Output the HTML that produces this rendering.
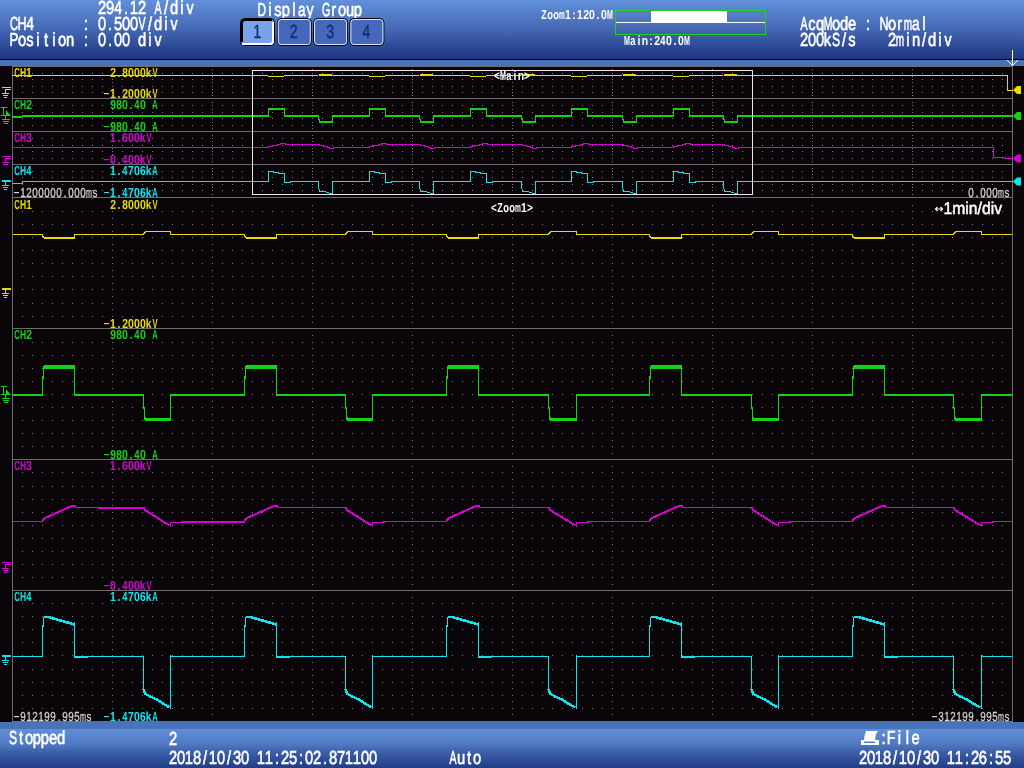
<!DOCTYPE html>
<html><head><meta charset="utf-8"><style>
html,body{margin:0;padding:0;width:1024px;height:768px;overflow:hidden;background:#0a0509;}
svg{position:absolute;left:0;top:0;display:block;will-change:transform;}
text{text-rendering:geometricPrecision;}
</style></head><body>
<svg width="1024" height="768" viewBox="0 0 1024 768">
<defs>
<linearGradient id="hg" x1="0" y1="0" x2="0" y2="1">
<stop offset="0" stop-color="#6290da"/>
<stop offset="0.5" stop-color="#4568b4"/>
<stop offset="0.8" stop-color="#2c4894"/>
<stop offset="1" stop-color="#203680"/>
</linearGradient>
<linearGradient id="fg" x1="0" y1="0" x2="0" y2="1">
<stop offset="0" stop-color="#6090d8"/>
<stop offset="0.4" stop-color="#5078c2"/>
<stop offset="0.6" stop-color="#3c5ea8"/>
<stop offset="1" stop-color="#223c86"/>
</linearGradient>
</defs>

<rect x="0" y="0" width="1024" height="59" fill="url(#hg)"/>
<rect x="0" y="59" width="1024" height="1" fill="#000000"/>
<rect x="0" y="60" width="1024" height="6" fill="#4a72b8"/>
<rect x="0" y="722" width="1024" height="7" fill="#4a72b8"/>
<rect x="0" y="729" width="1024" height="39" fill="url(#fg)"/>
<g shape-rendering="crispEdges">
<path d="M22 73.5H1003M22 79.5H1003M22 86.5H1003M22 92.5H1003M22 105.5H1003M22 112.5H1003M22 118.5H1003M22 125.5H1003M22 138.5H1003M22 145.5H1003M22 151.5H1003M22 158.5H1003M22 171.5H1003M22 177.5H1003M22 184.5H1003M22 190.5H1003M22 211.5H1003M22 224.5H1003M22 237.5H1003M22 250.5H1003M22 263.5H1003M22 276.5H1003M22 289.5H1003M22 303.5H1003M22 316.5H1003M22 342.5H1003M22 355.5H1003M22 368.5H1003M22 381.5H1003M22 394.5H1003M22 407.5H1003M22 420.5H1003M22 433.5H1003M22 446.5H1003M22 472.5H1003M22 486.5H1003M22 499.5H1003M22 512.5H1003M22 525.5H1003M22 538.5H1003M22 551.5H1003M22 564.5H1003M22 577.5H1003M22 603.5H1003M22 616.5H1003M22 629.5H1003M22 642.5H1003M22 655.5H1003M22 669.5H1003M22 682.5H1003M22 695.5H1003M22 708.5H1003" stroke="#7f7a80" stroke-width="1" stroke-dasharray="1 9" fill="none"/>
<path d="M112 69.5h1M112 73.5h1M112 76.5h1M112 79.5h1M112 82.5h1M112 86.5h1M112 89.5h1M112 92.5h1M112 95.5h1M112 102.5h1M112 105.5h1M112 109.5h1M112 112.5h1M112 115.5h1M112 118.5h1M112 122.5h1M112 125.5h1M112 128.5h1M112 135.5h1M112 138.5h1M112 141.5h1M112 145.5h1M112 148.5h1M112 151.5h1M112 154.5h1M112 158.5h1M112 161.5h1M112 168.5h1M112 171.5h1M112 174.5h1M112 177.5h1M112 181.5h1M112 184.5h1M112 187.5h1M112 190.5h1M112 194.5h1M112 205.5h1M112 211.5h1M112 218.5h1M112 224.5h1M112 231.5h1M112 237.5h1M112 244.5h1M112 250.5h1M112 257.5h1M112 263.5h1M112 270.5h1M112 276.5h1M112 283.5h1M112 289.5h1M112 296.5h1M112 303.5h1M112 309.5h1M112 316.5h1M112 322.5h1M112 335.5h1M112 342.5h1M112 348.5h1M112 355.5h1M112 361.5h1M112 368.5h1M112 374.5h1M112 381.5h1M112 388.5h1M112 394.5h1M112 401.5h1M112 407.5h1M112 414.5h1M112 420.5h1M112 427.5h1M112 433.5h1M112 440.5h1M112 446.5h1M112 453.5h1M112 466.5h1M112 472.5h1M112 479.5h1M112 486.5h1M112 492.5h1M112 499.5h1M112 505.5h1M112 512.5h1M112 518.5h1M112 525.5h1M112 531.5h1M112 538.5h1M112 544.5h1M112 551.5h1M112 557.5h1M112 564.5h1M112 570.5h1M112 577.5h1M112 584.5h1M112 597.5h1M112 603.5h1M112 610.5h1M112 616.5h1M112 623.5h1M112 629.5h1M112 636.5h1M112 642.5h1M112 649.5h1M112 655.5h1M112 662.5h1M112 669.5h1M112 675.5h1M112 682.5h1M112 688.5h1M112 695.5h1M112 701.5h1M112 708.5h1M112 714.5h1M212 69.5h1M212 73.5h1M212 76.5h1M212 79.5h1M212 82.5h1M212 86.5h1M212 89.5h1M212 92.5h1M212 95.5h1M212 102.5h1M212 105.5h1M212 109.5h1M212 112.5h1M212 115.5h1M212 118.5h1M212 122.5h1M212 125.5h1M212 128.5h1M212 135.5h1M212 138.5h1M212 141.5h1M212 145.5h1M212 148.5h1M212 151.5h1M212 154.5h1M212 158.5h1M212 161.5h1M212 168.5h1M212 171.5h1M212 174.5h1M212 177.5h1M212 181.5h1M212 184.5h1M212 187.5h1M212 190.5h1M212 194.5h1M212 205.5h1M212 211.5h1M212 218.5h1M212 224.5h1M212 231.5h1M212 237.5h1M212 244.5h1M212 250.5h1M212 257.5h1M212 263.5h1M212 270.5h1M212 276.5h1M212 283.5h1M212 289.5h1M212 296.5h1M212 303.5h1M212 309.5h1M212 316.5h1M212 322.5h1M212 335.5h1M212 342.5h1M212 348.5h1M212 355.5h1M212 361.5h1M212 368.5h1M212 374.5h1M212 381.5h1M212 388.5h1M212 394.5h1M212 401.5h1M212 407.5h1M212 414.5h1M212 420.5h1M212 427.5h1M212 433.5h1M212 440.5h1M212 446.5h1M212 453.5h1M212 466.5h1M212 472.5h1M212 479.5h1M212 486.5h1M212 492.5h1M212 499.5h1M212 505.5h1M212 512.5h1M212 518.5h1M212 525.5h1M212 531.5h1M212 538.5h1M212 544.5h1M212 551.5h1M212 557.5h1M212 564.5h1M212 570.5h1M212 577.5h1M212 584.5h1M212 597.5h1M212 603.5h1M212 610.5h1M212 616.5h1M212 623.5h1M212 629.5h1M212 636.5h1M212 642.5h1M212 649.5h1M212 655.5h1M212 662.5h1M212 669.5h1M212 675.5h1M212 682.5h1M212 688.5h1M212 695.5h1M212 701.5h1M212 708.5h1M212 714.5h1M312 69.5h1M312 73.5h1M312 76.5h1M312 79.5h1M312 82.5h1M312 86.5h1M312 89.5h1M312 92.5h1M312 95.5h1M312 102.5h1M312 105.5h1M312 109.5h1M312 112.5h1M312 115.5h1M312 118.5h1M312 122.5h1M312 125.5h1M312 128.5h1M312 135.5h1M312 138.5h1M312 141.5h1M312 145.5h1M312 148.5h1M312 151.5h1M312 154.5h1M312 158.5h1M312 161.5h1M312 168.5h1M312 171.5h1M312 174.5h1M312 177.5h1M312 181.5h1M312 184.5h1M312 187.5h1M312 190.5h1M312 194.5h1M312 205.5h1M312 211.5h1M312 218.5h1M312 224.5h1M312 231.5h1M312 237.5h1M312 244.5h1M312 250.5h1M312 257.5h1M312 263.5h1M312 270.5h1M312 276.5h1M312 283.5h1M312 289.5h1M312 296.5h1M312 303.5h1M312 309.5h1M312 316.5h1M312 322.5h1M312 335.5h1M312 342.5h1M312 348.5h1M312 355.5h1M312 361.5h1M312 368.5h1M312 374.5h1M312 381.5h1M312 388.5h1M312 394.5h1M312 401.5h1M312 407.5h1M312 414.5h1M312 420.5h1M312 427.5h1M312 433.5h1M312 440.5h1M312 446.5h1M312 453.5h1M312 466.5h1M312 472.5h1M312 479.5h1M312 486.5h1M312 492.5h1M312 499.5h1M312 505.5h1M312 512.5h1M312 518.5h1M312 525.5h1M312 531.5h1M312 538.5h1M312 544.5h1M312 551.5h1M312 557.5h1M312 564.5h1M312 570.5h1M312 577.5h1M312 584.5h1M312 597.5h1M312 603.5h1M312 610.5h1M312 616.5h1M312 623.5h1M312 629.5h1M312 636.5h1M312 642.5h1M312 649.5h1M312 655.5h1M312 662.5h1M312 669.5h1M312 675.5h1M312 682.5h1M312 688.5h1M312 695.5h1M312 701.5h1M312 708.5h1M312 714.5h1M412 69.5h1M412 73.5h1M412 76.5h1M412 79.5h1M412 82.5h1M412 86.5h1M412 89.5h1M412 92.5h1M412 95.5h1M412 102.5h1M412 105.5h1M412 109.5h1M412 112.5h1M412 115.5h1M412 118.5h1M412 122.5h1M412 125.5h1M412 128.5h1M412 135.5h1M412 138.5h1M412 141.5h1M412 145.5h1M412 148.5h1M412 151.5h1M412 154.5h1M412 158.5h1M412 161.5h1M412 168.5h1M412 171.5h1M412 174.5h1M412 177.5h1M412 181.5h1M412 184.5h1M412 187.5h1M412 190.5h1M412 194.5h1M412 205.5h1M412 211.5h1M412 218.5h1M412 224.5h1M412 231.5h1M412 237.5h1M412 244.5h1M412 250.5h1M412 257.5h1M412 263.5h1M412 270.5h1M412 276.5h1M412 283.5h1M412 289.5h1M412 296.5h1M412 303.5h1M412 309.5h1M412 316.5h1M412 322.5h1M412 335.5h1M412 342.5h1M412 348.5h1M412 355.5h1M412 361.5h1M412 368.5h1M412 374.5h1M412 381.5h1M412 388.5h1M412 394.5h1M412 401.5h1M412 407.5h1M412 414.5h1M412 420.5h1M412 427.5h1M412 433.5h1M412 440.5h1M412 446.5h1M412 453.5h1M412 466.5h1M412 472.5h1M412 479.5h1M412 486.5h1M412 492.5h1M412 499.5h1M412 505.5h1M412 512.5h1M412 518.5h1M412 525.5h1M412 531.5h1M412 538.5h1M412 544.5h1M412 551.5h1M412 557.5h1M412 564.5h1M412 570.5h1M412 577.5h1M412 584.5h1M412 597.5h1M412 603.5h1M412 610.5h1M412 616.5h1M412 623.5h1M412 629.5h1M412 636.5h1M412 642.5h1M412 649.5h1M412 655.5h1M412 662.5h1M412 669.5h1M412 675.5h1M412 682.5h1M412 688.5h1M412 695.5h1M412 701.5h1M412 708.5h1M412 714.5h1M512 69.5h1M512 73.5h1M512 76.5h1M512 79.5h1M512 82.5h1M512 86.5h1M512 89.5h1M512 92.5h1M512 95.5h1M512 102.5h1M512 105.5h1M512 109.5h1M512 112.5h1M512 115.5h1M512 118.5h1M512 122.5h1M512 125.5h1M512 128.5h1M512 135.5h1M512 138.5h1M512 141.5h1M512 145.5h1M512 148.5h1M512 151.5h1M512 154.5h1M512 158.5h1M512 161.5h1M512 168.5h1M512 171.5h1M512 174.5h1M512 177.5h1M512 181.5h1M512 184.5h1M512 187.5h1M512 190.5h1M512 194.5h1M512 205.5h1M512 211.5h1M512 218.5h1M512 224.5h1M512 231.5h1M512 237.5h1M512 244.5h1M512 250.5h1M512 257.5h1M512 263.5h1M512 270.5h1M512 276.5h1M512 283.5h1M512 289.5h1M512 296.5h1M512 303.5h1M512 309.5h1M512 316.5h1M512 322.5h1M512 335.5h1M512 342.5h1M512 348.5h1M512 355.5h1M512 361.5h1M512 368.5h1M512 374.5h1M512 381.5h1M512 388.5h1M512 394.5h1M512 401.5h1M512 407.5h1M512 414.5h1M512 420.5h1M512 427.5h1M512 433.5h1M512 440.5h1M512 446.5h1M512 453.5h1M512 466.5h1M512 472.5h1M512 479.5h1M512 486.5h1M512 492.5h1M512 499.5h1M512 505.5h1M512 512.5h1M512 518.5h1M512 525.5h1M512 531.5h1M512 538.5h1M512 544.5h1M512 551.5h1M512 557.5h1M512 564.5h1M512 570.5h1M512 577.5h1M512 584.5h1M512 597.5h1M512 603.5h1M512 610.5h1M512 616.5h1M512 623.5h1M512 629.5h1M512 636.5h1M512 642.5h1M512 649.5h1M512 655.5h1M512 662.5h1M512 669.5h1M512 675.5h1M512 682.5h1M512 688.5h1M512 695.5h1M512 701.5h1M512 708.5h1M512 714.5h1M612 69.5h1M612 73.5h1M612 76.5h1M612 79.5h1M612 82.5h1M612 86.5h1M612 89.5h1M612 92.5h1M612 95.5h1M612 102.5h1M612 105.5h1M612 109.5h1M612 112.5h1M612 115.5h1M612 118.5h1M612 122.5h1M612 125.5h1M612 128.5h1M612 135.5h1M612 138.5h1M612 141.5h1M612 145.5h1M612 148.5h1M612 151.5h1M612 154.5h1M612 158.5h1M612 161.5h1M612 168.5h1M612 171.5h1M612 174.5h1M612 177.5h1M612 181.5h1M612 184.5h1M612 187.5h1M612 190.5h1M612 194.5h1M612 205.5h1M612 211.5h1M612 218.5h1M612 224.5h1M612 231.5h1M612 237.5h1M612 244.5h1M612 250.5h1M612 257.5h1M612 263.5h1M612 270.5h1M612 276.5h1M612 283.5h1M612 289.5h1M612 296.5h1M612 303.5h1M612 309.5h1M612 316.5h1M612 322.5h1M612 335.5h1M612 342.5h1M612 348.5h1M612 355.5h1M612 361.5h1M612 368.5h1M612 374.5h1M612 381.5h1M612 388.5h1M612 394.5h1M612 401.5h1M612 407.5h1M612 414.5h1M612 420.5h1M612 427.5h1M612 433.5h1M612 440.5h1M612 446.5h1M612 453.5h1M612 466.5h1M612 472.5h1M612 479.5h1M612 486.5h1M612 492.5h1M612 499.5h1M612 505.5h1M612 512.5h1M612 518.5h1M612 525.5h1M612 531.5h1M612 538.5h1M612 544.5h1M612 551.5h1M612 557.5h1M612 564.5h1M612 570.5h1M612 577.5h1M612 584.5h1M612 597.5h1M612 603.5h1M612 610.5h1M612 616.5h1M612 623.5h1M612 629.5h1M612 636.5h1M612 642.5h1M612 649.5h1M612 655.5h1M612 662.5h1M612 669.5h1M612 675.5h1M612 682.5h1M612 688.5h1M612 695.5h1M612 701.5h1M612 708.5h1M612 714.5h1M712 69.5h1M712 73.5h1M712 76.5h1M712 79.5h1M712 82.5h1M712 86.5h1M712 89.5h1M712 92.5h1M712 95.5h1M712 102.5h1M712 105.5h1M712 109.5h1M712 112.5h1M712 115.5h1M712 118.5h1M712 122.5h1M712 125.5h1M712 128.5h1M712 135.5h1M712 138.5h1M712 141.5h1M712 145.5h1M712 148.5h1M712 151.5h1M712 154.5h1M712 158.5h1M712 161.5h1M712 168.5h1M712 171.5h1M712 174.5h1M712 177.5h1M712 181.5h1M712 184.5h1M712 187.5h1M712 190.5h1M712 194.5h1M712 205.5h1M712 211.5h1M712 218.5h1M712 224.5h1M712 231.5h1M712 237.5h1M712 244.5h1M712 250.5h1M712 257.5h1M712 263.5h1M712 270.5h1M712 276.5h1M712 283.5h1M712 289.5h1M712 296.5h1M712 303.5h1M712 309.5h1M712 316.5h1M712 322.5h1M712 335.5h1M712 342.5h1M712 348.5h1M712 355.5h1M712 361.5h1M712 368.5h1M712 374.5h1M712 381.5h1M712 388.5h1M712 394.5h1M712 401.5h1M712 407.5h1M712 414.5h1M712 420.5h1M712 427.5h1M712 433.5h1M712 440.5h1M712 446.5h1M712 453.5h1M712 466.5h1M712 472.5h1M712 479.5h1M712 486.5h1M712 492.5h1M712 499.5h1M712 505.5h1M712 512.5h1M712 518.5h1M712 525.5h1M712 531.5h1M712 538.5h1M712 544.5h1M712 551.5h1M712 557.5h1M712 564.5h1M712 570.5h1M712 577.5h1M712 584.5h1M712 597.5h1M712 603.5h1M712 610.5h1M712 616.5h1M712 623.5h1M712 629.5h1M712 636.5h1M712 642.5h1M712 649.5h1M712 655.5h1M712 662.5h1M712 669.5h1M712 675.5h1M712 682.5h1M712 688.5h1M712 695.5h1M712 701.5h1M712 708.5h1M712 714.5h1M812 69.5h1M812 73.5h1M812 76.5h1M812 79.5h1M812 82.5h1M812 86.5h1M812 89.5h1M812 92.5h1M812 95.5h1M812 102.5h1M812 105.5h1M812 109.5h1M812 112.5h1M812 115.5h1M812 118.5h1M812 122.5h1M812 125.5h1M812 128.5h1M812 135.5h1M812 138.5h1M812 141.5h1M812 145.5h1M812 148.5h1M812 151.5h1M812 154.5h1M812 158.5h1M812 161.5h1M812 168.5h1M812 171.5h1M812 174.5h1M812 177.5h1M812 181.5h1M812 184.5h1M812 187.5h1M812 190.5h1M812 194.5h1M812 205.5h1M812 211.5h1M812 218.5h1M812 224.5h1M812 231.5h1M812 237.5h1M812 244.5h1M812 250.5h1M812 257.5h1M812 263.5h1M812 270.5h1M812 276.5h1M812 283.5h1M812 289.5h1M812 296.5h1M812 303.5h1M812 309.5h1M812 316.5h1M812 322.5h1M812 335.5h1M812 342.5h1M812 348.5h1M812 355.5h1M812 361.5h1M812 368.5h1M812 374.5h1M812 381.5h1M812 388.5h1M812 394.5h1M812 401.5h1M812 407.5h1M812 414.5h1M812 420.5h1M812 427.5h1M812 433.5h1M812 440.5h1M812 446.5h1M812 453.5h1M812 466.5h1M812 472.5h1M812 479.5h1M812 486.5h1M812 492.5h1M812 499.5h1M812 505.5h1M812 512.5h1M812 518.5h1M812 525.5h1M812 531.5h1M812 538.5h1M812 544.5h1M812 551.5h1M812 557.5h1M812 564.5h1M812 570.5h1M812 577.5h1M812 584.5h1M812 597.5h1M812 603.5h1M812 610.5h1M812 616.5h1M812 623.5h1M812 629.5h1M812 636.5h1M812 642.5h1M812 649.5h1M812 655.5h1M812 662.5h1M812 669.5h1M812 675.5h1M812 682.5h1M812 688.5h1M812 695.5h1M812 701.5h1M812 708.5h1M812 714.5h1M912 69.5h1M912 73.5h1M912 76.5h1M912 79.5h1M912 82.5h1M912 86.5h1M912 89.5h1M912 92.5h1M912 95.5h1M912 102.5h1M912 105.5h1M912 109.5h1M912 112.5h1M912 115.5h1M912 118.5h1M912 122.5h1M912 125.5h1M912 128.5h1M912 135.5h1M912 138.5h1M912 141.5h1M912 145.5h1M912 148.5h1M912 151.5h1M912 154.5h1M912 158.5h1M912 161.5h1M912 168.5h1M912 171.5h1M912 174.5h1M912 177.5h1M912 181.5h1M912 184.5h1M912 187.5h1M912 190.5h1M912 194.5h1M912 205.5h1M912 211.5h1M912 218.5h1M912 224.5h1M912 231.5h1M912 237.5h1M912 244.5h1M912 250.5h1M912 257.5h1M912 263.5h1M912 270.5h1M912 276.5h1M912 283.5h1M912 289.5h1M912 296.5h1M912 303.5h1M912 309.5h1M912 316.5h1M912 322.5h1M912 335.5h1M912 342.5h1M912 348.5h1M912 355.5h1M912 361.5h1M912 368.5h1M912 374.5h1M912 381.5h1M912 388.5h1M912 394.5h1M912 401.5h1M912 407.5h1M912 414.5h1M912 420.5h1M912 427.5h1M912 433.5h1M912 440.5h1M912 446.5h1M912 453.5h1M912 466.5h1M912 472.5h1M912 479.5h1M912 486.5h1M912 492.5h1M912 499.5h1M912 505.5h1M912 512.5h1M912 518.5h1M912 525.5h1M912 531.5h1M912 538.5h1M912 544.5h1M912 551.5h1M912 557.5h1M912 564.5h1M912 570.5h1M912 577.5h1M912 584.5h1M912 597.5h1M912 603.5h1M912 610.5h1M912 616.5h1M912 623.5h1M912 629.5h1M912 636.5h1M912 642.5h1M912 649.5h1M912 655.5h1M912 662.5h1M912 669.5h1M912 675.5h1M912 682.5h1M912 688.5h1M912 695.5h1M912 701.5h1M912 708.5h1M912 714.5h1" stroke="#7f7a80" stroke-width="1" fill="none"/>
<rect x="12" y="66" width="1001" height="1" fill="#6e6a70"/>
<rect x="12" y="98" width="1001" height="1" fill="#6e6a70"/>
<rect x="12" y="131" width="1001" height="1" fill="#6e6a70"/>
<rect x="12" y="164" width="1001" height="1" fill="#6e6a70"/>
<rect x="12" y="197" width="1001" height="1" fill="#6e6a70"/>
<rect x="12" y="328" width="1001" height="1" fill="#6e6a70"/>
<rect x="12" y="459" width="1001" height="1" fill="#6e6a70"/>
<rect x="12" y="590" width="1001" height="1" fill="#6e6a70"/>
<rect x="12" y="721" width="1001" height="1" fill="#6e6a70"/>
<rect x="12" y="66" width="1" height="656" fill="#6e6a70"/>
<rect x="1012" y="66" width="1" height="656" fill="#6e6a70"/>
</g>
<g shape-rendering="crispEdges">
<rect x="13" y="234" width="30" height="1" fill="#e6dc00"/>
<rect x="42" y="234" width="1" height="3" fill="#e6dc00"/>
<rect x="43" y="236" width="1" height="2" fill="#e6dc00"/>
<rect x="44" y="237" width="31" height="2" fill="#e6dc00"/>
<rect x="74" y="234" width="1" height="4" fill="#e6dc00"/>
<rect x="75" y="234" width="69" height="1" fill="#e6dc00"/>
<rect x="143" y="233" width="1" height="2" fill="#e6dc00"/>
<rect x="144" y="232" width="1" height="2" fill="#e6dc00"/>
<rect x="145" y="231" width="1" height="2" fill="#e6dc00"/>
<rect x="145" y="231" width="26" height="1" fill="#e6dc00"/>
<rect x="170" y="231" width="1" height="4" fill="#e6dc00"/>
<rect x="171" y="234" width="74" height="1" fill="#e6dc00"/>
<rect x="244" y="234" width="1" height="3" fill="#e6dc00"/>
<rect x="245" y="236" width="1" height="2" fill="#e6dc00"/>
<rect x="246" y="237" width="31" height="2" fill="#e6dc00"/>
<rect x="276" y="234" width="1" height="4" fill="#e6dc00"/>
<rect x="277" y="234" width="69" height="1" fill="#e6dc00"/>
<rect x="345" y="233" width="1" height="2" fill="#e6dc00"/>
<rect x="346" y="232" width="1" height="2" fill="#e6dc00"/>
<rect x="347" y="231" width="1" height="2" fill="#e6dc00"/>
<rect x="347" y="231" width="26" height="1" fill="#e6dc00"/>
<rect x="372" y="231" width="1" height="4" fill="#e6dc00"/>
<rect x="373" y="234" width="74" height="1" fill="#e6dc00"/>
<rect x="446" y="234" width="1" height="3" fill="#e6dc00"/>
<rect x="447" y="236" width="1" height="2" fill="#e6dc00"/>
<rect x="448" y="237" width="31" height="2" fill="#e6dc00"/>
<rect x="478" y="234" width="1" height="4" fill="#e6dc00"/>
<rect x="479" y="234" width="70" height="1" fill="#e6dc00"/>
<rect x="548" y="233" width="1" height="2" fill="#e6dc00"/>
<rect x="549" y="232" width="1" height="2" fill="#e6dc00"/>
<rect x="550" y="231" width="1" height="2" fill="#e6dc00"/>
<rect x="550" y="231" width="27" height="1" fill="#e6dc00"/>
<rect x="576" y="231" width="1" height="4" fill="#e6dc00"/>
<rect x="577" y="234" width="73" height="1" fill="#e6dc00"/>
<rect x="649" y="234" width="1" height="3" fill="#e6dc00"/>
<rect x="650" y="236" width="1" height="2" fill="#e6dc00"/>
<rect x="651" y="237" width="31" height="2" fill="#e6dc00"/>
<rect x="681" y="234" width="1" height="4" fill="#e6dc00"/>
<rect x="682" y="234" width="70" height="1" fill="#e6dc00"/>
<rect x="751" y="233" width="1" height="2" fill="#e6dc00"/>
<rect x="752" y="232" width="1" height="2" fill="#e6dc00"/>
<rect x="753" y="231" width="1" height="2" fill="#e6dc00"/>
<rect x="753" y="231" width="26" height="1" fill="#e6dc00"/>
<rect x="778" y="231" width="1" height="4" fill="#e6dc00"/>
<rect x="779" y="234" width="74" height="1" fill="#e6dc00"/>
<rect x="852" y="234" width="1" height="3" fill="#e6dc00"/>
<rect x="853" y="236" width="1" height="2" fill="#e6dc00"/>
<rect x="854" y="237" width="31" height="2" fill="#e6dc00"/>
<rect x="884" y="234" width="1" height="4" fill="#e6dc00"/>
<rect x="885" y="234" width="69" height="1" fill="#e6dc00"/>
<rect x="953" y="233" width="1" height="2" fill="#e6dc00"/>
<rect x="954" y="232" width="1" height="2" fill="#e6dc00"/>
<rect x="955" y="231" width="1" height="2" fill="#e6dc00"/>
<rect x="955" y="231" width="27" height="1" fill="#e6dc00"/>
<rect x="981" y="231" width="1" height="4" fill="#e6dc00"/>
<rect x="982" y="234" width="30" height="1" fill="#e6dc00"/>
<rect x="13" y="394" width="30" height="2" fill="#14d214"/>
<rect x="42" y="376" width="1" height="20" fill="#14d214"/>
<rect x="43" y="366" width="1" height="13" fill="#14d214"/>
<rect x="44" y="365" width="31" height="4" fill="#14d214"/>
<rect x="74" y="365" width="1" height="31" fill="#14d214"/>
<rect x="75" y="394" width="69" height="2" fill="#14d214"/>
<rect x="143" y="394" width="1" height="15" fill="#14d214"/>
<rect x="144" y="407" width="1" height="13" fill="#14d214"/>
<rect x="145" y="417" width="1" height="4" fill="#14d214"/>
<rect x="146" y="418" width="25" height="3" fill="#14d214"/>
<rect x="170" y="394" width="1" height="27" fill="#14d214"/>
<rect x="171" y="394" width="74" height="2" fill="#14d214"/>
<rect x="244" y="376" width="1" height="20" fill="#14d214"/>
<rect x="245" y="366" width="1" height="13" fill="#14d214"/>
<rect x="246" y="365" width="31" height="4" fill="#14d214"/>
<rect x="276" y="365" width="1" height="31" fill="#14d214"/>
<rect x="277" y="394" width="69" height="2" fill="#14d214"/>
<rect x="345" y="394" width="1" height="15" fill="#14d214"/>
<rect x="346" y="407" width="1" height="13" fill="#14d214"/>
<rect x="347" y="417" width="1" height="4" fill="#14d214"/>
<rect x="348" y="418" width="25" height="3" fill="#14d214"/>
<rect x="372" y="394" width="1" height="27" fill="#14d214"/>
<rect x="373" y="394" width="74" height="2" fill="#14d214"/>
<rect x="446" y="376" width="1" height="20" fill="#14d214"/>
<rect x="447" y="366" width="1" height="13" fill="#14d214"/>
<rect x="448" y="365" width="31" height="4" fill="#14d214"/>
<rect x="478" y="365" width="1" height="31" fill="#14d214"/>
<rect x="479" y="394" width="70" height="2" fill="#14d214"/>
<rect x="548" y="394" width="1" height="15" fill="#14d214"/>
<rect x="549" y="407" width="1" height="13" fill="#14d214"/>
<rect x="550" y="417" width="1" height="4" fill="#14d214"/>
<rect x="551" y="418" width="26" height="3" fill="#14d214"/>
<rect x="576" y="394" width="1" height="27" fill="#14d214"/>
<rect x="577" y="394" width="73" height="2" fill="#14d214"/>
<rect x="649" y="376" width="1" height="20" fill="#14d214"/>
<rect x="650" y="366" width="1" height="13" fill="#14d214"/>
<rect x="651" y="365" width="31" height="4" fill="#14d214"/>
<rect x="681" y="365" width="1" height="31" fill="#14d214"/>
<rect x="682" y="394" width="70" height="2" fill="#14d214"/>
<rect x="751" y="394" width="1" height="15" fill="#14d214"/>
<rect x="752" y="407" width="1" height="13" fill="#14d214"/>
<rect x="753" y="417" width="1" height="4" fill="#14d214"/>
<rect x="754" y="418" width="25" height="3" fill="#14d214"/>
<rect x="778" y="394" width="1" height="27" fill="#14d214"/>
<rect x="779" y="394" width="74" height="2" fill="#14d214"/>
<rect x="852" y="376" width="1" height="20" fill="#14d214"/>
<rect x="853" y="366" width="1" height="13" fill="#14d214"/>
<rect x="854" y="365" width="31" height="4" fill="#14d214"/>
<rect x="884" y="365" width="1" height="31" fill="#14d214"/>
<rect x="885" y="394" width="69" height="2" fill="#14d214"/>
<rect x="953" y="394" width="1" height="15" fill="#14d214"/>
<rect x="954" y="407" width="1" height="13" fill="#14d214"/>
<rect x="955" y="417" width="1" height="4" fill="#14d214"/>
<rect x="956" y="418" width="26" height="3" fill="#14d214"/>
<rect x="981" y="394" width="1" height="27" fill="#14d214"/>
<rect x="982" y="394" width="30" height="2" fill="#14d214"/>
<rect x="13" y="521" width="30" height="1" fill="#d800d8"/>
<path d="M42.5,521.0 L43.5,519.0 L45.0,518.0 L73.0,505.5 L74.5,505.5 L75.0,507.0" stroke="#d800d8" stroke-width="2" fill="none" stroke-linejoin="round" stroke-linecap="butt" shape-rendering="crispEdges"/>
<rect x="75" y="507" width="69" height="1" fill="#d800d8"/>
<rect x="98" y="508" width="46" height="1" fill="#d800d8"/>
<path d="M143.5,507.5 L145.0,510.0 L169.5,525.5" stroke="#d800d8" stroke-width="2" fill="none" stroke-linejoin="round" stroke-linecap="butt" shape-rendering="crispEdges"/>
<rect x="170" y="522" width="1" height="5" fill="#d800d8"/>
<rect x="170" y="522" width="13" height="1" fill="#d800d8"/>
<rect x="181" y="521" width="64" height="2" fill="#d800d8"/>
<path d="M244.5,521.0 L245.5,519.0 L247.0,518.0 L275.0,505.5 L276.5,505.5 L277.0,507.0" stroke="#d800d8" stroke-width="2" fill="none" stroke-linejoin="round" stroke-linecap="butt" shape-rendering="crispEdges"/>
<rect x="277" y="507" width="69" height="1" fill="#d800d8"/>
<path d="M345.5,507.5 L347.0,510.0 L371.5,525.5" stroke="#d800d8" stroke-width="2" fill="none" stroke-linejoin="round" stroke-linecap="butt" shape-rendering="crispEdges"/>
<rect x="372" y="522" width="1" height="5" fill="#d800d8"/>
<rect x="372" y="522" width="13" height="1" fill="#d800d8"/>
<rect x="383" y="521" width="64" height="1" fill="#d800d8"/>
<path d="M446.5,521.0 L447.5,519.0 L449.0,518.0 L477.0,505.5 L478.5,505.5 L479.0,507.0" stroke="#d800d8" stroke-width="2" fill="none" stroke-linejoin="round" stroke-linecap="butt" shape-rendering="crispEdges"/>
<rect x="479" y="507" width="70" height="1" fill="#d800d8"/>
<path d="M548.5,507.5 L550.0,510.0 L575.5,525.5" stroke="#d800d8" stroke-width="2" fill="none" stroke-linejoin="round" stroke-linecap="butt" shape-rendering="crispEdges"/>
<rect x="576" y="522" width="1" height="5" fill="#d800d8"/>
<rect x="576" y="522" width="13" height="1" fill="#d800d8"/>
<rect x="587" y="521" width="63" height="1" fill="#d800d8"/>
<path d="M649.5,521.0 L650.5,519.0 L652.0,518.0 L680.0,505.5 L681.5,505.5 L682.0,507.0" stroke="#d800d8" stroke-width="2" fill="none" stroke-linejoin="round" stroke-linecap="butt" shape-rendering="crispEdges"/>
<rect x="682" y="507" width="70" height="1" fill="#d800d8"/>
<path d="M751.5,507.5 L753.0,510.0 L777.5,525.5" stroke="#d800d8" stroke-width="2" fill="none" stroke-linejoin="round" stroke-linecap="butt" shape-rendering="crispEdges"/>
<rect x="778" y="522" width="1" height="5" fill="#d800d8"/>
<rect x="778" y="522" width="13" height="1" fill="#d800d8"/>
<rect x="789" y="521" width="64" height="1" fill="#d800d8"/>
<path d="M852.5,521.0 L853.5,519.0 L855.0,518.0 L883.0,505.5 L884.5,505.5 L885.0,507.0" stroke="#d800d8" stroke-width="2" fill="none" stroke-linejoin="round" stroke-linecap="butt" shape-rendering="crispEdges"/>
<rect x="885" y="507" width="69" height="1" fill="#d800d8"/>
<path d="M953.5,507.5 L955.0,510.0 L980.5,525.5" stroke="#d800d8" stroke-width="2" fill="none" stroke-linejoin="round" stroke-linecap="butt" shape-rendering="crispEdges"/>
<rect x="981" y="522" width="1" height="5" fill="#d800d8"/>
<rect x="981" y="522" width="13" height="1" fill="#d800d8"/>
<rect x="992" y="521" width="20" height="1" fill="#d800d8"/>
<rect x="13" y="656" width="29" height="1" fill="#10e4ec"/>
<rect x="42" y="625" width="1" height="32" fill="#10e4ec"/>
<rect x="43" y="617" width="1" height="10" fill="#10e4ec"/>
<path d="M43.5,617.0 L48.5,617.0 L74.5,624.5" stroke="#10e4ec" stroke-width="2.6" fill="none" stroke-linejoin="round" stroke-linecap="butt" shape-rendering="crispEdges"/>
<rect x="74" y="622" width="1" height="36" fill="#10e4ec"/>
<rect x="74" y="656" width="14" height="2" fill="#10e4ec"/>
<rect x="88" y="656" width="55" height="1" fill="#10e4ec"/>
<rect x="143" y="656" width="1" height="35" fill="#10e4ec"/>
<path d="M143.5,689.0 L145.0,693.5 L150.0,696.5 L157.0,699.5 L163.0,703.5 L169.5,707.5" stroke="#10e4ec" stroke-width="2.4" fill="none" stroke-linejoin="round" stroke-linecap="butt" shape-rendering="crispEdges"/>
<rect x="170" y="655" width="1" height="54" fill="#10e4ec"/>
<rect x="170" y="656" width="74" height="1" fill="#10e4ec"/>
<rect x="244" y="625" width="1" height="32" fill="#10e4ec"/>
<rect x="245" y="617" width="1" height="10" fill="#10e4ec"/>
<path d="M245.5,617.0 L250.5,617.0 L276.5,624.5" stroke="#10e4ec" stroke-width="2.6" fill="none" stroke-linejoin="round" stroke-linecap="butt" shape-rendering="crispEdges"/>
<rect x="276" y="622" width="1" height="36" fill="#10e4ec"/>
<rect x="276" y="656" width="14" height="2" fill="#10e4ec"/>
<rect x="290" y="656" width="55" height="1" fill="#10e4ec"/>
<rect x="345" y="656" width="1" height="35" fill="#10e4ec"/>
<path d="M345.5,689.0 L347.0,693.5 L352.0,696.5 L359.0,699.5 L365.0,703.5 L371.5,707.5" stroke="#10e4ec" stroke-width="2.4" fill="none" stroke-linejoin="round" stroke-linecap="butt" shape-rendering="crispEdges"/>
<rect x="372" y="655" width="1" height="54" fill="#10e4ec"/>
<rect x="372" y="656" width="74" height="1" fill="#10e4ec"/>
<rect x="446" y="625" width="1" height="32" fill="#10e4ec"/>
<rect x="447" y="617" width="1" height="10" fill="#10e4ec"/>
<path d="M447.5,617.0 L452.5,617.0 L478.5,624.5" stroke="#10e4ec" stroke-width="2.6" fill="none" stroke-linejoin="round" stroke-linecap="butt" shape-rendering="crispEdges"/>
<rect x="478" y="622" width="1" height="36" fill="#10e4ec"/>
<rect x="478" y="656" width="14" height="2" fill="#10e4ec"/>
<rect x="492" y="656" width="56" height="1" fill="#10e4ec"/>
<rect x="548" y="656" width="1" height="35" fill="#10e4ec"/>
<path d="M548.5,689.0 L550.0,693.5 L555.0,696.5 L562.0,699.5 L568.0,703.5 L575.5,707.5" stroke="#10e4ec" stroke-width="2.4" fill="none" stroke-linejoin="round" stroke-linecap="butt" shape-rendering="crispEdges"/>
<rect x="576" y="655" width="1" height="54" fill="#10e4ec"/>
<rect x="576" y="656" width="73" height="1" fill="#10e4ec"/>
<rect x="649" y="625" width="1" height="32" fill="#10e4ec"/>
<rect x="650" y="617" width="1" height="10" fill="#10e4ec"/>
<path d="M650.5,617.0 L655.5,617.0 L681.5,624.5" stroke="#10e4ec" stroke-width="2.6" fill="none" stroke-linejoin="round" stroke-linecap="butt" shape-rendering="crispEdges"/>
<rect x="681" y="622" width="1" height="36" fill="#10e4ec"/>
<rect x="681" y="656" width="14" height="2" fill="#10e4ec"/>
<rect x="695" y="656" width="56" height="1" fill="#10e4ec"/>
<rect x="751" y="656" width="1" height="35" fill="#10e4ec"/>
<path d="M751.5,689.0 L753.0,693.5 L758.0,696.5 L765.0,699.5 L771.0,703.5 L777.5,707.5" stroke="#10e4ec" stroke-width="2.4" fill="none" stroke-linejoin="round" stroke-linecap="butt" shape-rendering="crispEdges"/>
<rect x="778" y="655" width="1" height="54" fill="#10e4ec"/>
<rect x="778" y="656" width="74" height="1" fill="#10e4ec"/>
<rect x="852" y="625" width="1" height="32" fill="#10e4ec"/>
<rect x="853" y="617" width="1" height="10" fill="#10e4ec"/>
<path d="M853.5,617.0 L858.5,617.0 L884.5,624.5" stroke="#10e4ec" stroke-width="2.6" fill="none" stroke-linejoin="round" stroke-linecap="butt" shape-rendering="crispEdges"/>
<rect x="884" y="622" width="1" height="36" fill="#10e4ec"/>
<rect x="884" y="656" width="14" height="2" fill="#10e4ec"/>
<rect x="898" y="656" width="55" height="1" fill="#10e4ec"/>
<rect x="953" y="656" width="1" height="35" fill="#10e4ec"/>
<path d="M953.5,689.0 L955.0,693.5 L960.0,696.5 L967.0,699.5 L973.0,703.5 L980.5,707.5" stroke="#10e4ec" stroke-width="2.4" fill="none" stroke-linejoin="round" stroke-linecap="butt" shape-rendering="crispEdges"/>
<rect x="981" y="655" width="1" height="54" fill="#10e4ec"/>
<rect x="981" y="656" width="31" height="1" fill="#10e4ec"/>
<rect x="12" y="75" width="256" height="1" fill="#e6dc00"/>
<rect x="268" y="76" width="16" height="1" fill="#e6dc00"/>
<rect x="284" y="75" width="34" height="1" fill="#e6dc00"/>
<rect x="319" y="74" width="13" height="2" fill="#e6dc00"/>
<rect x="332" y="75" width="37" height="1" fill="#e6dc00"/>
<rect x="369" y="76" width="16" height="1" fill="#e6dc00"/>
<rect x="385" y="75" width="34" height="1" fill="#e6dc00"/>
<rect x="420" y="74" width="13" height="2" fill="#e6dc00"/>
<rect x="433" y="75" width="37" height="1" fill="#e6dc00"/>
<rect x="470" y="76" width="16" height="1" fill="#e6dc00"/>
<rect x="486" y="75" width="35" height="1" fill="#e6dc00"/>
<rect x="522" y="74" width="13" height="2" fill="#e6dc00"/>
<rect x="535" y="75" width="36" height="1" fill="#e6dc00"/>
<rect x="571" y="76" width="16" height="1" fill="#e6dc00"/>
<rect x="587" y="75" width="35" height="1" fill="#e6dc00"/>
<rect x="623" y="74" width="13" height="2" fill="#e6dc00"/>
<rect x="636" y="75" width="37" height="1" fill="#e6dc00"/>
<rect x="673" y="76" width="16" height="1" fill="#e6dc00"/>
<rect x="689" y="75" width="34" height="1" fill="#e6dc00"/>
<rect x="724" y="74" width="13" height="2" fill="#e6dc00"/>
<rect x="737" y="75" width="271" height="1" fill="#e6dc00"/>
<rect x="1007" y="75" width="1" height="16" fill="#e6dc00"/>
<rect x="1007" y="90" width="6" height="1" fill="#e6dc00"/>
<rect x="12" y="116" width="10" height="2" fill="#14d214"/>
<rect x="22" y="115" width="247" height="2" fill="#14d214"/>
<rect x="268" y="108" width="1" height="9" fill="#14d214"/>
<rect x="268" y="108" width="17" height="2" fill="#14d214"/>
<rect x="284" y="108" width="1" height="9" fill="#14d214"/>
<rect x="284" y="115" width="35" height="2" fill="#14d214"/>
<rect x="318" y="115" width="1" height="5" fill="#14d214"/>
<rect x="319" y="119" width="1" height="4" fill="#14d214"/>
<rect x="319" y="121" width="14" height="2" fill="#14d214"/>
<rect x="332" y="115" width="1" height="8" fill="#14d214"/>
<rect x="332" y="115" width="38" height="2" fill="#14d214"/>
<rect x="369" y="108" width="1" height="9" fill="#14d214"/>
<rect x="369" y="108" width="17" height="2" fill="#14d214"/>
<rect x="385" y="108" width="1" height="9" fill="#14d214"/>
<rect x="385" y="115" width="35" height="2" fill="#14d214"/>
<rect x="419" y="115" width="1" height="5" fill="#14d214"/>
<rect x="420" y="119" width="1" height="4" fill="#14d214"/>
<rect x="420" y="121" width="14" height="2" fill="#14d214"/>
<rect x="433" y="115" width="1" height="8" fill="#14d214"/>
<rect x="433" y="115" width="38" height="2" fill="#14d214"/>
<rect x="470" y="108" width="1" height="9" fill="#14d214"/>
<rect x="470" y="108" width="17" height="2" fill="#14d214"/>
<rect x="486" y="108" width="1" height="9" fill="#14d214"/>
<rect x="486" y="115" width="36" height="2" fill="#14d214"/>
<rect x="521" y="115" width="1" height="5" fill="#14d214"/>
<rect x="522" y="119" width="1" height="4" fill="#14d214"/>
<rect x="522" y="121" width="14" height="2" fill="#14d214"/>
<rect x="535" y="115" width="1" height="8" fill="#14d214"/>
<rect x="535" y="115" width="37" height="2" fill="#14d214"/>
<rect x="571" y="108" width="1" height="9" fill="#14d214"/>
<rect x="571" y="108" width="17" height="2" fill="#14d214"/>
<rect x="587" y="108" width="1" height="9" fill="#14d214"/>
<rect x="587" y="115" width="36" height="2" fill="#14d214"/>
<rect x="622" y="115" width="1" height="5" fill="#14d214"/>
<rect x="623" y="119" width="1" height="4" fill="#14d214"/>
<rect x="623" y="121" width="14" height="2" fill="#14d214"/>
<rect x="636" y="115" width="1" height="8" fill="#14d214"/>
<rect x="636" y="115" width="38" height="2" fill="#14d214"/>
<rect x="673" y="108" width="1" height="9" fill="#14d214"/>
<rect x="673" y="108" width="17" height="2" fill="#14d214"/>
<rect x="689" y="108" width="1" height="9" fill="#14d214"/>
<rect x="689" y="115" width="35" height="2" fill="#14d214"/>
<rect x="723" y="115" width="1" height="5" fill="#14d214"/>
<rect x="724" y="119" width="1" height="4" fill="#14d214"/>
<rect x="724" y="121" width="14" height="2" fill="#14d214"/>
<rect x="737" y="115" width="1" height="8" fill="#14d214"/>
<rect x="737" y="115" width="276" height="2" fill="#14d214"/>
<path d="M12,147.5 L268,147.5 L268,146.5 L272,146.5 L272,145.5 L277,145.5 L277,144.5 L280,144.5 L280,143.5 L285,143.5 L285,144.5 L319.5,144.5 L319.5,145.5 L323.5,145.5 L323.5,146.5 L327,146.5 L327,147.5 L329,147.5 L329,148.5 L333,148.5 L333,147.5 L369,147.5 L369,146.5 L373,146.5 L373,145.5 L378,145.5 L378,144.5 L381,144.5 L381,143.5 L386,143.5 L386,144.5 L420.5,144.5 L420.5,145.5 L424.5,145.5 L424.5,146.5 L428,146.5 L428,147.5 L430,147.5 L430,148.5 L434,148.5 L434,147.5 L470,147.5 L470,146.5 L474,146.5 L474,145.5 L479,145.5 L479,144.5 L482,144.5 L482,143.5 L487,143.5 L487,144.5 L522.5,144.5 L522.5,145.5 L526.5,145.5 L526.5,146.5 L530,146.5 L530,147.5 L532,147.5 L532,148.5 L536,148.5 L536,147.5 L571,147.5 L571,146.5 L575,146.5 L575,145.5 L580,145.5 L580,144.5 L583,144.5 L583,143.5 L588,143.5 L588,144.5 L623.5,144.5 L623.5,145.5 L627.5,145.5 L627.5,146.5 L631,146.5 L631,147.5 L633,147.5 L633,148.5 L637,148.5 L637,147.5 L673,147.5 L673,146.5 L677,146.5 L677,145.5 L682,145.5 L682,144.5 L685,144.5 L685,143.5 L690,143.5 L690,144.5 L724.5,144.5 L724.5,145.5 L728.5,145.5 L728.5,146.5 L732,146.5 L732,147.5 L734,147.5 L734,148.5 L738,148.5 L738,147.5 L993,147.5 L993,157.5 L1005,157.5 L1005,158.5 L1013,158.5" stroke="#d800d8" stroke-width="1" fill="none" stroke-linejoin="miter" shape-rendering="crispEdges"/>
<path d="M12,183.5 L22,183.5 L22,181.5 L268.5,181.5 L268.5,171.5 L273,171.5 L273,172.5 L278.5,172.5 L278.5,173.5 L284.5,173.5 L284.5,182 L290,182 L290,181.5 L318.5,181.5 L318.5,187 L319.5,191.5 L326,192 L330,193.5 L332.5,193.5 L332.5,181.5 L369.5,181.5 L369.5,171.5 L374,171.5 L374,172.5 L379.5,172.5 L379.5,173.5 L385.5,173.5 L385.5,182 L391,182 L391,181.5 L419.5,181.5 L419.5,187 L420.5,191.5 L427,192 L431,193.5 L433.5,193.5 L433.5,181.5 L470.5,181.5 L470.5,171.5 L475,171.5 L475,172.5 L480.5,172.5 L480.5,173.5 L486.5,173.5 L486.5,182 L492,182 L492,181.5 L521.5,181.5 L521.5,187 L522.5,191.5 L529,192 L533,193.5 L535.5,193.5 L535.5,181.5 L571.5,181.5 L571.5,171.5 L576,171.5 L576,172.5 L581.5,172.5 L581.5,173.5 L587.5,173.5 L587.5,182 L593,182 L593,181.5 L622.5,181.5 L622.5,187 L623.5,191.5 L630,192 L634,193.5 L636.5,193.5 L636.5,181.5 L673.5,181.5 L673.5,171.5 L678,171.5 L678,172.5 L683.5,172.5 L683.5,173.5 L689.5,173.5 L689.5,182 L695,182 L695,181.5 L723.5,181.5 L723.5,187 L724.5,191.5 L731,192 L735,193.5 L737.5,193.5 L737.5,181.5 L1013,181.5" stroke="#10e4ec" stroke-width="1" fill="none" stroke-linejoin="miter" shape-rendering="crispEdges"/>
</g>
<rect x="252.5" y="70.5" width="500" height="124" fill="none" stroke="#e8e8e8" stroke-width="1" shape-rendering="crispEdges"/>
<path d="M1013,90 L1017,86 L1021,86 L1021,94 L1017,94 Z" fill="#e6dc00"/>
<path d="M1013,116 L1017,112 L1021,112 L1021,120 L1017,120 Z" fill="#14d214"/>
<path d="M1013,158.5 L1017,154.5 L1021,154.5 L1021,162.5 L1017,162.5 Z" fill="#d800d8"/>
<path d="M1013,181.5 L1017,177.5 L1021,177.5 L1021,185.5 L1017,185.5 Z" fill="#10e4ec"/>
<path d="M1012.5,50 V65 M1007,60 L1012.5,65.5 L1018,60" stroke="#ffffff" stroke-width="1" fill="none"/>
<g fill="#e6dc00" shape-rendering="crispEdges"><rect x="2" y="87" width="9" height="1"/><rect x="5" y="89" width="6" height="1"/><rect x="5" y="89" width="1" height="5"/><rect x="2" y="93" width="7" height="1"/><rect x="3" y="95" width="5" height="1"/><rect x="4" y="97" width="3" height="1"/></g>
<g fill="#14d214" shape-rendering="crispEdges"><rect x="1" y="107" width="6" height="1"/><rect x="3" y="107" width="1" height="8"/><path d="M6,110 L11,116 L1,116 L1,115 L6,115 Z" shape-rendering="auto"/><rect x="5" y="116" width="1" height="4"/><rect x="2" y="119" width="8" height="1"/><rect x="3" y="121" width="6" height="1"/><rect x="4" y="123" width="4" height="1"/></g>
<g fill="#d800d8" shape-rendering="crispEdges"><rect x="2" y="156" width="9" height="1"/><rect x="5" y="158" width="6" height="1"/><rect x="5" y="158" width="1" height="5"/><rect x="2" y="162" width="7" height="1"/><rect x="3" y="164" width="5" height="1"/></g>
<g fill="#10e4ec" shape-rendering="crispEdges"><rect x="2" y="180" width="9" height="2"/><rect x="5" y="182" width="1" height="4"/><rect x="2" y="185" width="7" height="1"/><rect x="3" y="187" width="5" height="1"/><rect x="4" y="189" width="3" height="1"/></g>
<g fill="#e6dc00" shape-rendering="crispEdges"><rect x="2" y="288" width="9" height="2"/><rect x="5" y="290" width="1" height="4"/><rect x="2" y="293" width="7" height="1"/><rect x="3" y="295" width="5" height="1"/><rect x="4" y="297" width="3" height="1"/></g>
<g fill="#14d214" shape-rendering="crispEdges"><rect x="1" y="386" width="6" height="1"/><rect x="3" y="386" width="1" height="8"/><path d="M6,389 L11,395 L1,395 L1,394 L6,394 Z" shape-rendering="auto"/><rect x="5" y="395" width="1" height="4"/><rect x="2" y="398" width="8" height="1"/><rect x="3" y="400" width="6" height="1"/><rect x="4" y="402" width="4" height="1"/></g>
<g fill="#d800d8" shape-rendering="crispEdges"><rect x="2" y="562" width="9" height="1"/><rect x="5" y="564" width="6" height="1"/><rect x="5" y="564" width="1" height="5"/><rect x="2" y="568" width="7" height="1"/><rect x="3" y="570" width="5" height="1"/><rect x="4" y="572" width="3" height="1"/></g>
<g fill="#10e4ec" shape-rendering="crispEdges"><rect x="2" y="655" width="9" height="2"/><rect x="5" y="657" width="1" height="4"/><rect x="2" y="660" width="7" height="1"/><rect x="3" y="662" width="5" height="1"/><rect x="4" y="664" width="3" height="1"/></g>
<g font-family='"Liberation Sans", sans-serif' font-size="13.09" font-weight="bold" fill="#e6dc00"><text transform="translate(14.19 77) scale(0.584 1)">C</text><text transform="translate(19.93 77) scale(0.650 1)">H</text><text transform="translate(25.90 77) scale(0.800 1)">1</text></g>
<g font-family='"Liberation Sans", sans-serif' font-size="13.09" font-weight="bold" fill="#e6dc00"><text transform="translate(110.14 77) scale(0.793 1)">2</text><text transform="translate(117.55 77) scale(0.800 1)">.</text><text transform="translate(122.18 77) scale(0.774 1)">8</text><text transform="translate(128.10 77) scale(0.800 1)">0</text><text transform="translate(134.10 77) scale(0.800 1)">0</text><text transform="translate(140.10 77) scale(0.800 1)">0</text><text transform="translate(145.78 77) scale(0.784 1)">k</text><text transform="translate(152.45 77) scale(0.585 1)">V</text></g>
<rect x="104" y="93" width="5" height="1.2" fill="#e6dc00"/>
<g font-family='"Liberation Sans", sans-serif' font-size="13.09" font-weight="bold" fill="#e6dc00"><text transform="translate(109.90 98) scale(0.800 1)">1</text><text transform="translate(117.55 98) scale(0.800 1)">.</text><text transform="translate(122.14 98) scale(0.793 1)">2</text><text transform="translate(128.10 98) scale(0.800 1)">0</text><text transform="translate(134.10 98) scale(0.800 1)">0</text><text transform="translate(140.10 98) scale(0.800 1)">0</text><text transform="translate(145.78 98) scale(0.784 1)">k</text><text transform="translate(152.45 98) scale(0.585 1)">V</text></g>
<g font-family='"Liberation Sans", sans-serif' font-size="13.09" font-weight="bold" fill="#14d214"><text transform="translate(14.19 109) scale(0.584 1)">C</text><text transform="translate(19.93 109) scale(0.650 1)">H</text><text transform="translate(26.14 109) scale(0.793 1)">2</text></g>
<g font-family='"Liberation Sans", sans-serif' font-size="13.09" font-weight="bold" fill="#14d214"><text transform="translate(110.14 109) scale(0.789 1)">9</text><text transform="translate(116.18 109) scale(0.774 1)">8</text><text transform="translate(122.10 109) scale(0.800 1)">0</text><text transform="translate(129.55 109) scale(0.800 1)">.</text><text transform="translate(134.36 109) scale(0.713 1)">4</text><text transform="translate(140.10 109) scale(0.800 1)">0</text><text transform="translate(152.31 109) scale(0.569 1)">A</text></g>
<rect x="104" y="126" width="5" height="1.2" fill="#14d214"/>
<g font-family='"Liberation Sans", sans-serif' font-size="13.09" font-weight="bold" fill="#14d214"><text transform="translate(110.14 131) scale(0.789 1)">9</text><text transform="translate(116.18 131) scale(0.774 1)">8</text><text transform="translate(122.10 131) scale(0.800 1)">0</text><text transform="translate(129.55 131) scale(0.800 1)">.</text><text transform="translate(134.36 131) scale(0.713 1)">4</text><text transform="translate(140.10 131) scale(0.800 1)">0</text><text transform="translate(152.31 131) scale(0.569 1)">A</text></g>
<g font-family='"Liberation Sans", sans-serif' font-size="13.09" font-weight="bold" fill="#d800d8"><text transform="translate(14.19 142) scale(0.584 1)">C</text><text transform="translate(19.93 142) scale(0.650 1)">H</text><text transform="translate(26.27 142) scale(0.768 1)">3</text></g>
<g font-family='"Liberation Sans", sans-serif' font-size="13.09" font-weight="bold" fill="#d800d8"><text transform="translate(109.90 142) scale(0.800 1)">1</text><text transform="translate(117.55 142) scale(0.800 1)">.</text><text transform="translate(122.12 142) scale(0.790 1)">6</text><text transform="translate(128.10 142) scale(0.800 1)">0</text><text transform="translate(134.10 142) scale(0.800 1)">0</text><text transform="translate(139.78 142) scale(0.784 1)">k</text><text transform="translate(146.45 142) scale(0.585 1)">V</text></g>
<rect x="104" y="159" width="5" height="1.2" fill="#d800d8"/>
<g font-family='"Liberation Sans", sans-serif' font-size="13.09" font-weight="bold" fill="#d800d8"><text transform="translate(110.10 164) scale(0.800 1)">0</text><text transform="translate(117.55 164) scale(0.800 1)">.</text><text transform="translate(122.36 164) scale(0.713 1)">4</text><text transform="translate(128.10 164) scale(0.800 1)">0</text><text transform="translate(134.10 164) scale(0.800 1)">0</text><text transform="translate(139.78 164) scale(0.784 1)">k</text><text transform="translate(146.45 164) scale(0.585 1)">V</text></g>
<g font-family='"Liberation Sans", sans-serif' font-size="13.09" font-weight="bold" fill="#10e4ec"><text transform="translate(14.19 175) scale(0.584 1)">C</text><text transform="translate(19.93 175) scale(0.650 1)">H</text><text transform="translate(26.36 175) scale(0.713 1)">4</text></g>
<g font-family='"Liberation Sans", sans-serif' font-size="13.09" font-weight="bold" fill="#10e4ec"><text transform="translate(109.90 175) scale(0.800 1)">1</text><text transform="translate(117.55 175) scale(0.800 1)">.</text><text transform="translate(122.36 175) scale(0.713 1)">4</text><text transform="translate(128.09 175) scale(0.800 1)">7</text><text transform="translate(134.10 175) scale(0.800 1)">0</text><text transform="translate(140.12 175) scale(0.790 1)">6</text><text transform="translate(145.78 175) scale(0.784 1)">k</text><text transform="translate(152.31 175) scale(0.569 1)">A</text></g>
<rect x="104" y="192" width="5" height="1.2" fill="#10e4ec"/>
<g font-family='"Liberation Sans", sans-serif' font-size="13.09" font-weight="bold" fill="#10e4ec"><text transform="translate(109.90 197) scale(0.800 1)">1</text><text transform="translate(117.55 197) scale(0.800 1)">.</text><text transform="translate(122.36 197) scale(0.713 1)">4</text><text transform="translate(128.09 197) scale(0.800 1)">7</text><text transform="translate(134.10 197) scale(0.800 1)">0</text><text transform="translate(140.12 197) scale(0.790 1)">6</text><text transform="translate(145.78 197) scale(0.784 1)">k</text><text transform="translate(152.31 197) scale(0.569 1)">A</text></g>
<g font-family='"Liberation Sans", sans-serif' font-size="13.09" font-weight="bold" fill="#e6dc00"><text transform="translate(14.19 209) scale(0.584 1)">C</text><text transform="translate(19.93 209) scale(0.650 1)">H</text><text transform="translate(25.90 209) scale(0.800 1)">1</text></g>
<g font-family='"Liberation Sans", sans-serif' font-size="13.09" font-weight="bold" fill="#e6dc00"><text transform="translate(110.14 209) scale(0.793 1)">2</text><text transform="translate(117.55 209) scale(0.800 1)">.</text><text transform="translate(122.18 209) scale(0.774 1)">8</text><text transform="translate(128.10 209) scale(0.800 1)">0</text><text transform="translate(134.10 209) scale(0.800 1)">0</text><text transform="translate(140.10 209) scale(0.800 1)">0</text><text transform="translate(145.78 209) scale(0.784 1)">k</text><text transform="translate(152.45 209) scale(0.585 1)">V</text></g>
<rect x="104" y="323" width="5" height="1.2" fill="#e6dc00"/>
<g font-family='"Liberation Sans", sans-serif' font-size="13.09" font-weight="bold" fill="#e6dc00"><text transform="translate(109.90 328) scale(0.800 1)">1</text><text transform="translate(117.55 328) scale(0.800 1)">.</text><text transform="translate(122.14 328) scale(0.793 1)">2</text><text transform="translate(128.10 328) scale(0.800 1)">0</text><text transform="translate(134.10 328) scale(0.800 1)">0</text><text transform="translate(140.10 328) scale(0.800 1)">0</text><text transform="translate(145.78 328) scale(0.784 1)">k</text><text transform="translate(152.45 328) scale(0.585 1)">V</text></g>
<g font-family='"Liberation Sans", sans-serif' font-size="13.09" font-weight="bold" fill="#14d214"><text transform="translate(14.19 339) scale(0.584 1)">C</text><text transform="translate(19.93 339) scale(0.650 1)">H</text><text transform="translate(26.14 339) scale(0.793 1)">2</text></g>
<g font-family='"Liberation Sans", sans-serif' font-size="13.09" font-weight="bold" fill="#14d214"><text transform="translate(110.14 339) scale(0.789 1)">9</text><text transform="translate(116.18 339) scale(0.774 1)">8</text><text transform="translate(122.10 339) scale(0.800 1)">0</text><text transform="translate(129.55 339) scale(0.800 1)">.</text><text transform="translate(134.36 339) scale(0.713 1)">4</text><text transform="translate(140.10 339) scale(0.800 1)">0</text><text transform="translate(152.31 339) scale(0.569 1)">A</text></g>
<rect x="104" y="454" width="5" height="1.2" fill="#14d214"/>
<g font-family='"Liberation Sans", sans-serif' font-size="13.09" font-weight="bold" fill="#14d214"><text transform="translate(110.14 459) scale(0.789 1)">9</text><text transform="translate(116.18 459) scale(0.774 1)">8</text><text transform="translate(122.10 459) scale(0.800 1)">0</text><text transform="translate(129.55 459) scale(0.800 1)">.</text><text transform="translate(134.36 459) scale(0.713 1)">4</text><text transform="translate(140.10 459) scale(0.800 1)">0</text><text transform="translate(152.31 459) scale(0.569 1)">A</text></g>
<g font-family='"Liberation Sans", sans-serif' font-size="13.09" font-weight="bold" fill="#d800d8"><text transform="translate(14.19 470) scale(0.584 1)">C</text><text transform="translate(19.93 470) scale(0.650 1)">H</text><text transform="translate(26.27 470) scale(0.768 1)">3</text></g>
<g font-family='"Liberation Sans", sans-serif' font-size="13.09" font-weight="bold" fill="#d800d8"><text transform="translate(109.90 470) scale(0.800 1)">1</text><text transform="translate(117.55 470) scale(0.800 1)">.</text><text transform="translate(122.12 470) scale(0.790 1)">6</text><text transform="translate(128.10 470) scale(0.800 1)">0</text><text transform="translate(134.10 470) scale(0.800 1)">0</text><text transform="translate(139.78 470) scale(0.784 1)">k</text><text transform="translate(146.45 470) scale(0.585 1)">V</text></g>
<rect x="104" y="585" width="5" height="1.2" fill="#d800d8"/>
<g font-family='"Liberation Sans", sans-serif' font-size="13.09" font-weight="bold" fill="#d800d8"><text transform="translate(110.10 590) scale(0.800 1)">0</text><text transform="translate(117.55 590) scale(0.800 1)">.</text><text transform="translate(122.36 590) scale(0.713 1)">4</text><text transform="translate(128.10 590) scale(0.800 1)">0</text><text transform="translate(134.10 590) scale(0.800 1)">0</text><text transform="translate(139.78 590) scale(0.784 1)">k</text><text transform="translate(146.45 590) scale(0.585 1)">V</text></g>
<g font-family='"Liberation Sans", sans-serif' font-size="13.09" font-weight="bold" fill="#10e4ec"><text transform="translate(14.19 601) scale(0.584 1)">C</text><text transform="translate(19.93 601) scale(0.650 1)">H</text><text transform="translate(26.36 601) scale(0.713 1)">4</text></g>
<g font-family='"Liberation Sans", sans-serif' font-size="13.09" font-weight="bold" fill="#10e4ec"><text transform="translate(109.90 601) scale(0.800 1)">1</text><text transform="translate(117.55 601) scale(0.800 1)">.</text><text transform="translate(122.36 601) scale(0.713 1)">4</text><text transform="translate(128.09 601) scale(0.800 1)">7</text><text transform="translate(134.10 601) scale(0.800 1)">0</text><text transform="translate(140.12 601) scale(0.790 1)">6</text><text transform="translate(145.78 601) scale(0.784 1)">k</text><text transform="translate(152.31 601) scale(0.569 1)">A</text></g>
<rect x="104" y="716" width="5" height="1.2" fill="#10e4ec"/>
<g font-family='"Liberation Sans", sans-serif' font-size="13.09" font-weight="bold" fill="#10e4ec"><text transform="translate(109.90 721) scale(0.800 1)">1</text><text transform="translate(117.55 721) scale(0.800 1)">.</text><text transform="translate(122.36 721) scale(0.713 1)">4</text><text transform="translate(128.09 721) scale(0.800 1)">7</text><text transform="translate(134.10 721) scale(0.800 1)">0</text><text transform="translate(140.12 721) scale(0.790 1)">6</text><text transform="translate(145.78 721) scale(0.784 1)">k</text><text transform="translate(152.31 721) scale(0.569 1)">A</text></g>
<rect x="14" y="192" width="5" height="1.2" fill="#d4d4d4"/>
<g font-family='"Liberation Sans", sans-serif' font-size="13.09" font-weight="normal" fill="#d4d4d4" stroke="#d4d4d4" stroke-width="0.3"><text transform="translate(20.14 197) scale(0.750 1)">1</text><text transform="translate(26.27 197) scale(0.750 1)">2</text><text transform="translate(32.27 197) scale(0.750 1)">0</text><text transform="translate(38.27 197) scale(0.750 1)">0</text><text transform="translate(44.27 197) scale(0.750 1)">0</text><text transform="translate(50.27 197) scale(0.750 1)">0</text><text transform="translate(56.27 197) scale(0.750 1)">0</text><text transform="translate(63.64 197) scale(0.750 1)">.</text><text transform="translate(68.27 197) scale(0.750 1)">0</text><text transform="translate(74.27 197) scale(0.750 1)">0</text><text transform="translate(80.27 197) scale(0.750 1)">0</text><text transform="translate(86.03 197) scale(0.545 1)">m</text><text transform="translate(92.59 197) scale(0.750 1)">s</text></g>
<g font-family='"Liberation Sans", sans-serif' font-size="13.09" font-weight="normal" fill="#d4d4d4" stroke="#d4d4d4" stroke-width="0.3"><text transform="translate(968.27 197) scale(0.750 1)">0</text><text transform="translate(975.64 197) scale(0.750 1)">.</text><text transform="translate(980.27 197) scale(0.750 1)">0</text><text transform="translate(986.27 197) scale(0.750 1)">0</text><text transform="translate(992.27 197) scale(0.750 1)">0</text><text transform="translate(998.03 197) scale(0.545 1)">m</text><text transform="translate(1004.59 197) scale(0.750 1)">s</text></g>
<rect x="14" y="716" width="5" height="1.2" fill="#d4d4d4"/>
<g font-family='"Liberation Sans", sans-serif' font-size="13.09" font-weight="normal" fill="#d4d4d4" stroke="#d4d4d4" stroke-width="0.3"><text transform="translate(20.27 721) scale(0.750 1)">9</text><text transform="translate(26.14 721) scale(0.750 1)">1</text><text transform="translate(32.27 721) scale(0.750 1)">2</text><text transform="translate(38.14 721) scale(0.750 1)">1</text><text transform="translate(44.27 721) scale(0.750 1)">9</text><text transform="translate(50.27 721) scale(0.750 1)">9</text><text transform="translate(57.64 721) scale(0.750 1)">.</text><text transform="translate(62.27 721) scale(0.750 1)">9</text><text transform="translate(68.27 721) scale(0.750 1)">9</text><text transform="translate(74.28 721) scale(0.750 1)">5</text><text transform="translate(80.03 721) scale(0.545 1)">m</text><text transform="translate(86.59 721) scale(0.750 1)">s</text></g>
<rect x="932" y="716" width="5" height="1.2" fill="#d4d4d4"/>
<g font-family='"Liberation Sans", sans-serif' font-size="13.09" font-weight="normal" fill="#d4d4d4" stroke="#d4d4d4" stroke-width="0.3"><text transform="translate(938.30 721) scale(0.750 1)">3</text><text transform="translate(944.14 721) scale(0.750 1)">1</text><text transform="translate(950.27 721) scale(0.750 1)">2</text><text transform="translate(956.14 721) scale(0.750 1)">1</text><text transform="translate(962.27 721) scale(0.750 1)">9</text><text transform="translate(968.27 721) scale(0.750 1)">9</text><text transform="translate(975.64 721) scale(0.750 1)">.</text><text transform="translate(980.27 721) scale(0.750 1)">9</text><text transform="translate(986.27 721) scale(0.750 1)">9</text><text transform="translate(992.28 721) scale(0.750 1)">5</text><text transform="translate(998.03 721) scale(0.545 1)">m</text><text transform="translate(1004.59 721) scale(0.750 1)">s</text></g>
<g font-family='"Liberation Sans", sans-serif' font-size="13.09" font-weight="bold" fill="#ffffff"><text transform="translate(494.08 80) scale(0.762 1)">&lt;</text><text transform="translate(500.02 80) scale(0.546 1)">M</text><text transform="translate(506.23 80) scale(0.716 1)">a</text><text transform="translate(513.55 80) scale(0.800 1)">i</text><text transform="translate(517.82 80) scale(0.791 1)">n</text><text transform="translate(524.08 80) scale(0.762 1)">&gt;</text></g>
<g font-family='"Liberation Sans", sans-serif' font-size="13.09" font-weight="bold" fill="#ffffff"><text transform="translate(491.08 212) scale(0.762 1)">&lt;</text><text transform="translate(497.23 212) scale(0.692 1)">Z</text><text transform="translate(503.13 212) scale(0.717 1)">o</text><text transform="translate(509.13 212) scale(0.717 1)">o</text><text transform="translate(515.07 212) scale(0.502 1)">m</text><text transform="translate(520.90 212) scale(0.800 1)">1</text><text transform="translate(527.08 212) scale(0.762 1)">&gt;</text></g>
<path d="M935.5,209 H942.5 M937.5,207 L935.5,209 L937.5,211 M940.5,207 L942.5,209 L940.5,211" stroke="#ffffff" stroke-width="1.2" fill="none"/>
<text x="943.5" y="214" font-family='"Liberation Sans", sans-serif' font-size="17" fill="#ffffff" stroke="#ffffff" stroke-width="0.5" textLength="58.5" lengthAdjust="spacingAndGlyphs">1min/div</text>
<g font-family='"Liberation Sans", sans-serif' font-size="18.91" font-weight="normal" fill="#ffffff" stroke="#ffffff" stroke-width="0.6"><text transform="translate(97.90 14) scale(0.780 1)">2</text><text transform="translate(105.90 14) scale(0.780 1)">9</text><text transform="translate(114.18 14) scale(0.735 1)">4</text><text transform="translate(123.95 14) scale(0.780 1)">.</text><text transform="translate(129.70 14) scale(0.780 1)">1</text><text transform="translate(137.90 14) scale(0.780 1)">2</text><text transform="translate(154.48 14) scale(0.558 1)">A</text><text transform="translate(163.95 14) scale(0.780 1)">/</text><text transform="translate(170.06 14) scale(0.780 1)">d</text><text transform="translate(180.37 14) scale(0.780 1)">i</text><text transform="translate(186.45 14) scale(0.751 1)">v</text></g>
<g font-family='"Liberation Sans", sans-serif' font-size="18.91" font-weight="normal" fill="#ffffff" stroke="#ffffff" stroke-width="0.6"><text transform="translate(9.94 30) scale(0.585 1)">C</text><text transform="translate(17.47 30) scale(0.663 1)">H</text><text transform="translate(26.18 30) scale(0.735 1)">4</text><text transform="translate(83.95 30) scale(0.780 1)">:</text><text transform="translate(97.93 30) scale(0.774 1)">0</text><text transform="translate(107.95 30) scale(0.780 1)">.</text><text transform="translate(113.91 30) scale(0.780 1)">5</text><text transform="translate(121.93 30) scale(0.774 1)">0</text><text transform="translate(129.93 30) scale(0.774 1)">0</text><text transform="translate(138.45 30) scale(0.562 1)">V</text><text transform="translate(147.95 30) scale(0.780 1)">/</text><text transform="translate(154.06 30) scale(0.780 1)">d</text><text transform="translate(164.37 30) scale(0.780 1)">i</text><text transform="translate(170.45 30) scale(0.751 1)">v</text></g>
<g font-family='"Liberation Sans", sans-serif' font-size="18.91" font-weight="normal" fill="#ffffff" stroke="#ffffff" stroke-width="0.6"><text transform="translate(9.42 46) scale(0.696 1)">P</text><text transform="translate(17.90 46) scale(0.780 1)">o</text><text transform="translate(26.37 46) scale(0.780 1)">s</text><text transform="translate(36.37 46) scale(0.780 1)">i</text><text transform="translate(43.89 46) scale(0.780 1)">t</text><text transform="translate(52.37 46) scale(0.780 1)">i</text><text transform="translate(57.90 46) scale(0.780 1)">o</text><text transform="translate(65.89 46) scale(0.780 1)">n</text><text transform="translate(83.95 46) scale(0.780 1)">:</text><text transform="translate(97.93 46) scale(0.774 1)">0</text><text transform="translate(107.95 46) scale(0.780 1)">.</text><text transform="translate(113.93 46) scale(0.774 1)">0</text><text transform="translate(121.93 46) scale(0.774 1)">0</text><text transform="translate(138.06 46) scale(0.780 1)">d</text><text transform="translate(148.37 46) scale(0.780 1)">i</text><text transform="translate(154.45 46) scale(0.751 1)">v</text></g>
<g font-family='"Liberation Sans", sans-serif' font-size="18.91" font-weight="normal" fill="#ffffff" stroke="#ffffff" stroke-width="0.6"><text transform="translate(257.53 16) scale(0.625 1)">D</text><text transform="translate(268.37 16) scale(0.780 1)">i</text><text transform="translate(274.37 16) scale(0.780 1)">s</text><text transform="translate(281.73 16) scale(0.780 1)">p</text><text transform="translate(292.36 16) scale(0.780 1)">l</text><text transform="translate(297.92 16) scale(0.721 1)">a</text><text transform="translate(306.47 16) scale(0.747 1)">y</text><text transform="translate(321.96 16) scale(0.567 1)">G</text><text transform="translate(331.18 16) scale(0.780 1)">r</text><text transform="translate(337.90 16) scale(0.780 1)">o</text><text transform="translate(345.91 16) scale(0.780 1)">u</text><text transform="translate(353.73 16) scale(0.780 1)">p</text></g>
<g>
<rect x="240.5" y="18.5" width="34" height="27" rx="4" fill="#7aa2ea" stroke="#000" stroke-width="1"/>
<path d="M242,44 H270 Q273,44 273,41 V22" stroke="#ffffff" stroke-width="2" fill="none"/>
<path d="M242,42 V23 Q242,20 245,20 H272" stroke="#000000" stroke-width="2" fill="none"/>
<rect x="277.3" y="18.5" width="34" height="27" rx="4" fill="#4668bc" stroke="#000" stroke-width="1"/>
<rect x="278.3" y="19.5" width="32" height="25" rx="3" fill="none" stroke="#dfe6f5" stroke-width="1"/>
<rect x="313.6" y="18.5" width="34" height="27" rx="4" fill="#4668bc" stroke="#000" stroke-width="1"/>
<rect x="314.6" y="19.5" width="32" height="25" rx="3" fill="none" stroke="#dfe6f5" stroke-width="1"/>
<rect x="349.9" y="18.5" width="34" height="27" rx="4" fill="#4668bc" stroke="#000" stroke-width="1"/>
<rect x="350.9" y="19.5" width="32" height="25" rx="3" fill="none" stroke="#dfe6f5" stroke-width="1"/>
</g>
<g font-family='"Liberation Sans", sans-serif' font-size="18.91" font-weight="normal" fill="#10306c" stroke="#10306c" stroke-width="0.4"><text transform="translate(253.36 38) scale(0.750 1)">1</text></g>
<g font-family='"Liberation Sans", sans-serif' font-size="18.91" font-weight="normal" fill="#10306c" stroke="#10306c" stroke-width="0.4"><text transform="translate(289.86 38) scale(0.750 1)">2</text></g>
<g font-family='"Liberation Sans", sans-serif' font-size="18.91" font-weight="normal" fill="#10306c" stroke="#10306c" stroke-width="0.4"><text transform="translate(326.20 38) scale(0.750 1)">3</text></g>
<g font-family='"Liberation Sans", sans-serif' font-size="18.91" font-weight="normal" fill="#10306c" stroke="#10306c" stroke-width="0.4"><text transform="translate(362.58 38) scale(0.735 1)">4</text></g>
<g font-family='"Liberation Sans", sans-serif' font-size="13.09" font-weight="bold" fill="#ffffff"><text transform="translate(541.23 19) scale(0.692 1)">Z</text><text transform="translate(547.13 19) scale(0.717 1)">o</text><text transform="translate(553.13 19) scale(0.717 1)">o</text><text transform="translate(559.07 19) scale(0.502 1)">m</text><text transform="translate(564.90 19) scale(0.800 1)">1</text><text transform="translate(572.26 19) scale(0.800 1)">:</text><text transform="translate(576.90 19) scale(0.800 1)">1</text><text transform="translate(583.14 19) scale(0.793 1)">2</text><text transform="translate(589.10 19) scale(0.800 1)">0</text><text transform="translate(596.55 19) scale(0.800 1)">.</text><text transform="translate(601.10 19) scale(0.800 1)">0</text><text transform="translate(607.02 19) scale(0.546 1)">M</text></g>
<rect x="615.5" y="10.5" width="150" height="24" fill="none" stroke="#20d020" stroke-width="1" shape-rendering="crispEdges"/>
<rect x="651" y="11" width="76" height="11" fill="#ffffff" shape-rendering="crispEdges"/>
<rect x="616" y="22" width="149" height="1" fill="#ffffff" shape-rendering="crispEdges"/>
<g font-family='"Liberation Sans", sans-serif' font-size="13.09" font-weight="bold" fill="#ffffff"><text transform="translate(624.02 45) scale(0.546 1)">M</text><text transform="translate(630.23 45) scale(0.716 1)">a</text><text transform="translate(637.55 45) scale(0.800 1)">i</text><text transform="translate(641.82 45) scale(0.791 1)">n</text><text transform="translate(649.26 45) scale(0.800 1)">:</text><text transform="translate(654.14 45) scale(0.793 1)">2</text><text transform="translate(660.36 45) scale(0.713 1)">4</text><text transform="translate(666.10 45) scale(0.800 1)">0</text><text transform="translate(673.55 45) scale(0.800 1)">.</text><text transform="translate(678.10 45) scale(0.800 1)">0</text><text transform="translate(684.02 45) scale(0.546 1)">M</text></g>
<g font-family='"Liberation Sans", sans-serif' font-size="18.91" font-weight="normal" fill="#ffffff" stroke="#ffffff" stroke-width="0.6"><text transform="translate(800.48 30) scale(0.558 1)">A</text><text transform="translate(808.19 30) scale(0.780 1)">c</text><text transform="translate(816.06 30) scale(0.780 1)">q</text><text transform="translate(823.64 30) scale(0.553 1)">M</text><text transform="translate(831.90 30) scale(0.780 1)">o</text><text transform="translate(840.06 30) scale(0.780 1)">d</text><text transform="translate(847.91 30) scale(0.780 1)">e</text><text transform="translate(865.95 30) scale(0.780 1)">:</text><text transform="translate(879.47 30) scale(0.663 1)">N</text><text transform="translate(887.90 30) scale(0.780 1)">o</text><text transform="translate(897.18 30) scale(0.780 1)">r</text><text transform="translate(903.84 30) scale(0.528 1)">m</text><text transform="translate(911.92 30) scale(0.721 1)">a</text><text transform="translate(922.36 30) scale(0.780 1)">l</text></g>
<g font-family='"Liberation Sans", sans-serif' font-size="18.91" font-weight="normal" fill="#ffffff" stroke="#ffffff" stroke-width="0.6"><text transform="translate(799.90 46) scale(0.780 1)">2</text><text transform="translate(807.93 46) scale(0.774 1)">0</text><text transform="translate(815.93 46) scale(0.774 1)">0</text><text transform="translate(823.81 46) scale(0.780 1)">k</text><text transform="translate(831.95 46) scale(0.643 1)">S</text><text transform="translate(841.95 46) scale(0.780 1)">/</text><text transform="translate(848.37 46) scale(0.780 1)">s</text><text transform="translate(887.90 46) scale(0.780 1)">2</text><text transform="translate(895.84 46) scale(0.528 1)">m</text><text transform="translate(906.37 46) scale(0.780 1)">i</text><text transform="translate(911.89 46) scale(0.780 1)">n</text><text transform="translate(921.95 46) scale(0.780 1)">/</text><text transform="translate(928.06 46) scale(0.780 1)">d</text><text transform="translate(938.37 46) scale(0.780 1)">i</text><text transform="translate(944.45 46) scale(0.751 1)">v</text></g>
<g font-family='"Liberation Sans", sans-serif' font-size="18.91" font-weight="normal" fill="#ffffff" stroke="#ffffff" stroke-width="0.6"><text transform="translate(8.95 744) scale(0.643 1)">S</text><text transform="translate(18.89 744) scale(0.780 1)">t</text><text transform="translate(24.90 744) scale(0.780 1)">o</text><text transform="translate(32.73 744) scale(0.780 1)">p</text><text transform="translate(40.73 744) scale(0.780 1)">p</text><text transform="translate(48.91 744) scale(0.780 1)">e</text><text transform="translate(57.06 744) scale(0.780 1)">d</text></g>
<g font-family='"Liberation Sans", sans-serif' font-size="18.91" font-weight="normal" fill="#ffffff" stroke="#ffffff" stroke-width="0.6"><text transform="translate(168.90 745) scale(0.780 1)">2</text></g>
<g font-family='"Liberation Sans", sans-serif' font-size="18.91" font-weight="normal" fill="#ffffff" stroke="#ffffff" stroke-width="0.6"><text transform="translate(168.90 764) scale(0.780 1)">2</text><text transform="translate(176.93 764) scale(0.774 1)">0</text><text transform="translate(184.70 764) scale(0.780 1)">1</text><text transform="translate(192.90 764) scale(0.780 1)">8</text><text transform="translate(202.95 764) scale(0.780 1)">/</text><text transform="translate(208.70 764) scale(0.780 1)">1</text><text transform="translate(216.93 764) scale(0.774 1)">0</text><text transform="translate(226.95 764) scale(0.780 1)">/</text><text transform="translate(232.94 764) scale(0.780 1)">3</text><text transform="translate(240.93 764) scale(0.774 1)">0</text><text transform="translate(256.70 764) scale(0.780 1)">1</text><text transform="translate(264.70 764) scale(0.780 1)">1</text><text transform="translate(274.95 764) scale(0.780 1)">:</text><text transform="translate(280.90 764) scale(0.780 1)">2</text><text transform="translate(288.91 764) scale(0.780 1)">5</text><text transform="translate(298.95 764) scale(0.780 1)">:</text><text transform="translate(304.93 764) scale(0.774 1)">0</text><text transform="translate(312.90 764) scale(0.780 1)">2</text><text transform="translate(322.95 764) scale(0.780 1)">.</text><text transform="translate(328.90 764) scale(0.780 1)">8</text><text transform="translate(336.89 764) scale(0.780 1)">7</text><text transform="translate(344.70 764) scale(0.780 1)">1</text><text transform="translate(352.70 764) scale(0.780 1)">1</text><text transform="translate(360.93 764) scale(0.774 1)">0</text><text transform="translate(368.93 764) scale(0.774 1)">0</text></g>
<g font-family='"Liberation Sans", sans-serif' font-size="18.91" font-weight="normal" fill="#ffffff" stroke="#ffffff" stroke-width="0.6"><text transform="translate(449.48 764) scale(0.558 1)">A</text><text transform="translate(456.91 764) scale(0.780 1)">u</text><text transform="translate(466.89 764) scale(0.780 1)">t</text><text transform="translate(472.90 764) scale(0.780 1)">o</text></g>
<g font-family='"Liberation Sans", sans-serif' font-size="18.91" font-weight="normal" fill="#ffffff" stroke="#ffffff" stroke-width="0.6"><text transform="translate(881.45 744) scale(0.780 1)">:</text><text transform="translate(886.83 744) scale(0.757 1)">F</text><text transform="translate(897.87 744) scale(0.780 1)">i</text><text transform="translate(905.86 744) scale(0.780 1)">l</text><text transform="translate(911.41 744) scale(0.780 1)">e</text></g>
<g font-family='"Liberation Sans", sans-serif' font-size="18.91" font-weight="normal" fill="#ffffff" stroke="#ffffff" stroke-width="0.6"><text transform="translate(858.90 764) scale(0.780 1)">2</text><text transform="translate(866.93 764) scale(0.774 1)">0</text><text transform="translate(874.70 764) scale(0.780 1)">1</text><text transform="translate(882.90 764) scale(0.780 1)">8</text><text transform="translate(892.95 764) scale(0.780 1)">/</text><text transform="translate(898.70 764) scale(0.780 1)">1</text><text transform="translate(906.93 764) scale(0.774 1)">0</text><text transform="translate(916.95 764) scale(0.780 1)">/</text><text transform="translate(922.94 764) scale(0.780 1)">3</text><text transform="translate(930.93 764) scale(0.774 1)">0</text><text transform="translate(946.70 764) scale(0.780 1)">1</text><text transform="translate(954.70 764) scale(0.780 1)">1</text><text transform="translate(964.95 764) scale(0.780 1)">:</text><text transform="translate(970.90 764) scale(0.780 1)">2</text><text transform="translate(978.85 764) scale(0.780 1)">6</text><text transform="translate(988.95 764) scale(0.780 1)">:</text><text transform="translate(994.91 764) scale(0.780 1)">5</text><text transform="translate(1002.91 764) scale(0.780 1)">5</text></g>
<path d="M866,731 L878,731 L876,734 L875,740 L864,740 L864.5,736 Z" fill="#ffffff"/>
<path d="M861,740 H879 V745 H861 Z M864,741.5 V743 H875 V741.5 Z" fill="#ffffff" fill-rule="evenodd"/>
</svg></body></html>
